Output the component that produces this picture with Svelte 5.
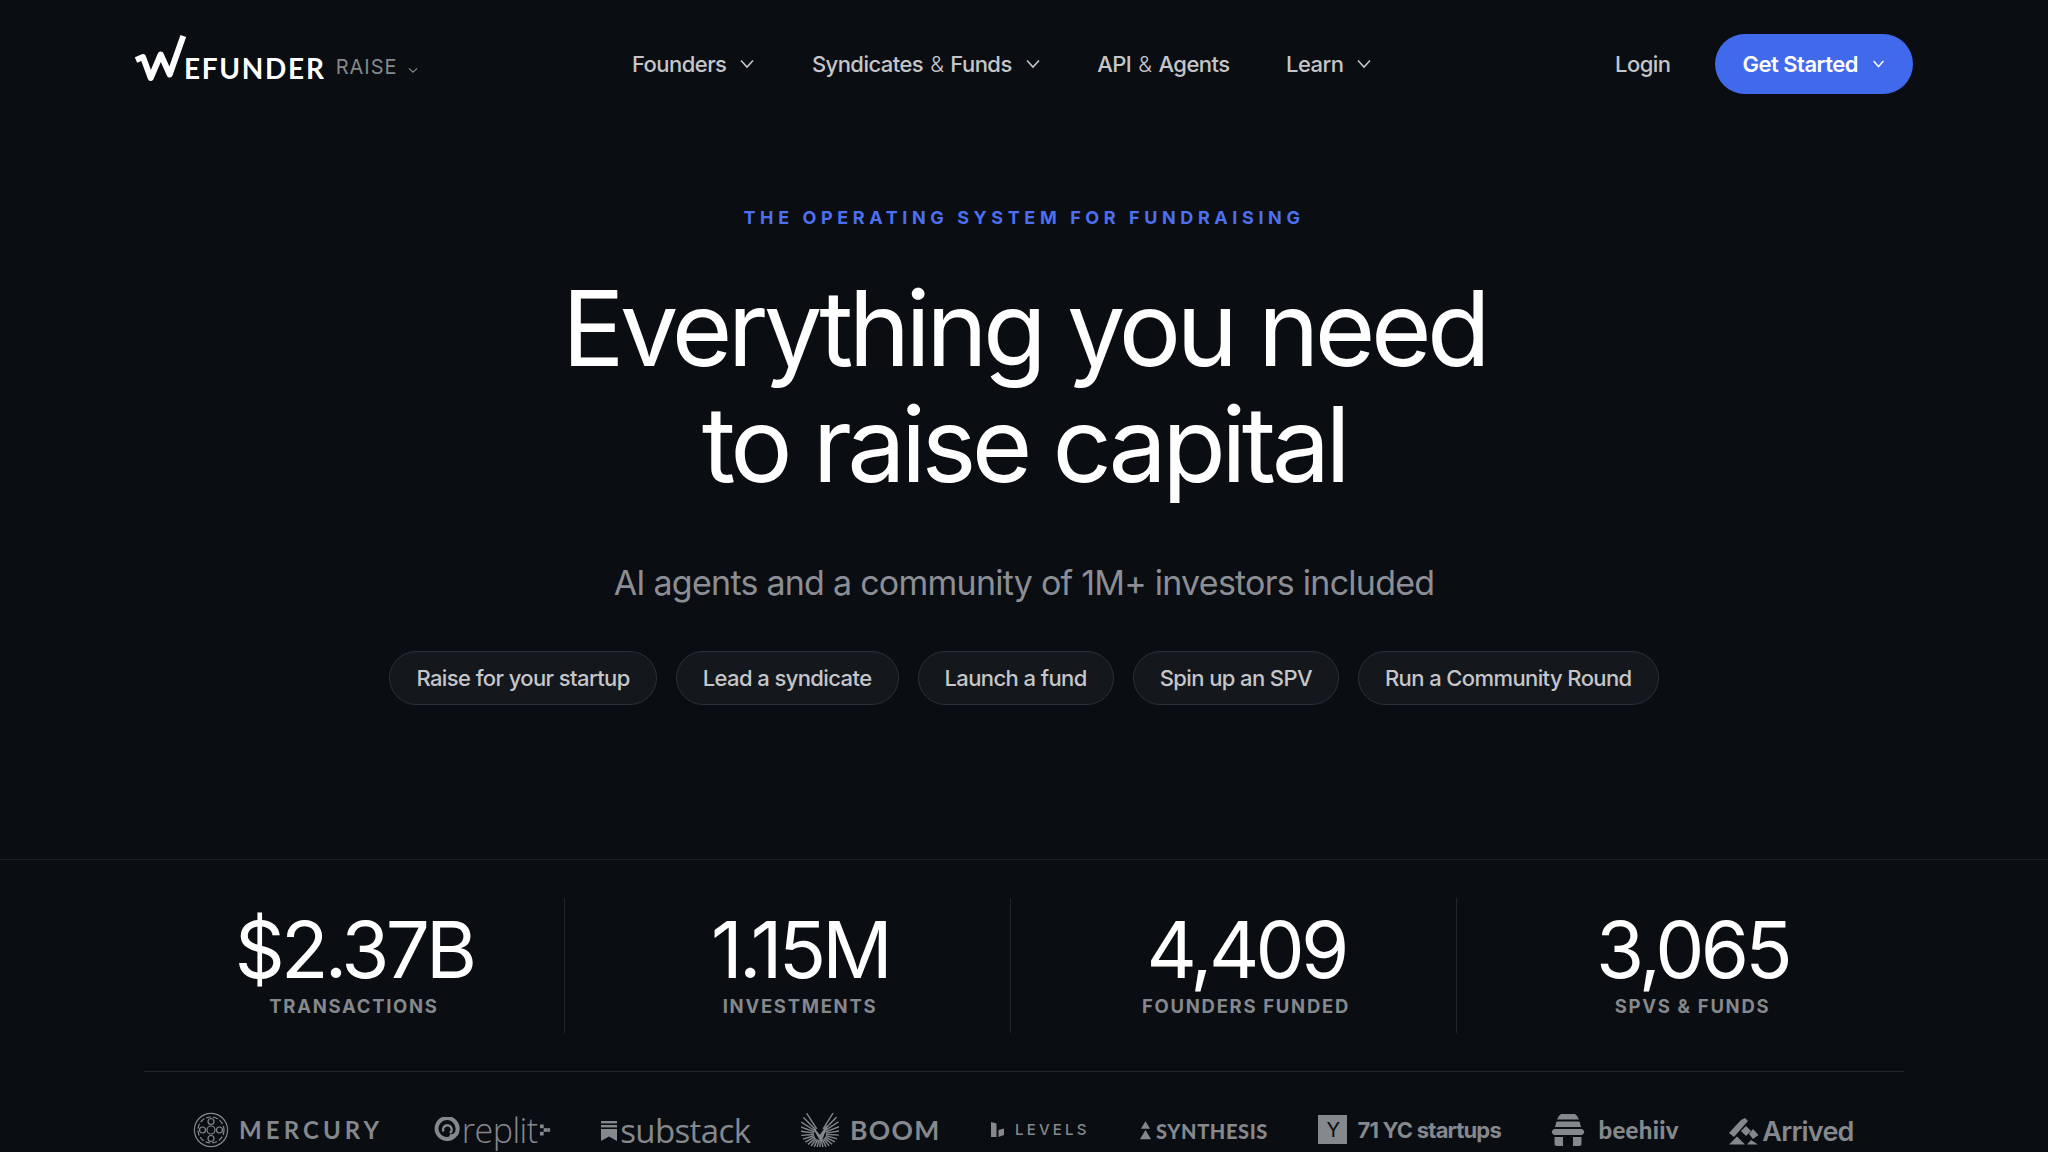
<script lang="ts">
  const navItems = [
    { before: 'Founders', caret: true },
    { before: 'Syndicates', amp: true, after: 'Funds', caret: true },
    { before: 'API', amp: true, after: 'Agents', caret: false },
    { before: 'Learn', caret: true }
  ];
  const chips = ['Raise for your startup', 'Lead a syndicate', 'Launch a fund', 'Spin up an SPV', 'Run a Community Round'];
  const stats = [
    { value: '$2.37B', label: 'TRANSACTIONS' },
    { value: '1.15M', label: 'INVESTMENTS' },
    { value: '4,409', label: 'FOUNDERS FUNDED' },
    { value: '3,065', label: 'SPVS & FUNDS' }
  ];
  // boom mark: rays fan out from a centre, long on the wings and short underneath, notch on top
  const rays: { x1: number; y1: number; x2: number; y2: number }[] = [];
  for (let deg = -32; deg >= -328; deg -= 12.300) {
    const off = Math.abs(deg) > 180 ? 360 - Math.abs(deg) : Math.abs(deg);
    const r = 13 + 12 * Math.pow((180 - off) / 150, 1.300);
    const a = (deg * Math.PI) / 180;
    rays.push({
      x1: 19 - 6 * Math.sin(a),
      y1: 21 - 6 * Math.cos(a),
      x2: 19 - r * Math.sin(a),
      y2: 21 - r * Math.cos(a)
    });
  }
</script>

<div class="page">
  <header class="nav">
    <a class="brand" href="#top">
      <svg class="brand-w" viewBox="0 0 56 50" width="56" height="50" aria-hidden="true">
        <path d="M1 26 L8 23 L15.700 44 L25.700 20.500 L34.700 40.500 L48.300 2" fill="none" stroke="#fff" stroke-width="6" stroke-linejoin="round" />
      </svg>
      <span class="brand-name">EFUNDER</span>
      <span class="brand-sub">RAISE</span>
      <svg class="brand-caret" viewBox="0 0 12 8" width="10" height="7"><path d="M1 1.500 L6 6 L11 1.500" fill="none" stroke="currentColor" stroke-width="1.400" /></svg>
    </a>
    <nav class="links">
      {#each navItems as item}
        <a href="#top" class="link">
          <span>{item.before}{#if item.amp}<span class="amp">&amp;</span>{item.after}{/if}</span>
          {#if item.caret}
            <svg viewBox="0 0 16 10" width="16" height="10"><path d="M2 1.500 L8 8 L14 1.500" fill="none" stroke="currentColor" stroke-width="1.600" /></svg>
          {/if}
        </a>
      {/each}
    </nav>
    <div class="actions">
      <a href="#top" class="link login">Login</a>
      <a href="#top" class="cta">
        Get Started
        <svg viewBox="0 0 14 9" width="13" height="8"><path d="M1.500 1 L7 7.500 L12.500 1" fill="none" stroke="currentColor" stroke-width="1.700" /></svg>
      </a>
    </div>
  </header>

  <section class="hero">
    <p class="eyebrow">THE OPERATING SYSTEM FOR FUNDRAISING</p>
    <h1>Everything you need<br />to raise capital</h1>
    <p class="sub">AI agents and a community of 1M+ investors included</p>
    <div class="chips">
      {#each chips as chip}
        <a href="#top" class="chip">{chip}</a>
      {/each}
    </div>
  </section>

  <section class="proof">
    <div class="stats">
      {#each stats as s}
        <div class="stat">
          <div class="stat-value">{s.value}</div>
          <div class="stat-label">{s.label}</div>
        </div>
      {/each}
    </div>

    <div class="logos">
      <div class="logo mercury">
        <svg viewBox="0 0 36 36" width="36" height="36" fill="none" stroke="#85888c" stroke-width="1.200">
          <circle cx="18" cy="18" r="16.600" />
          <circle cx="18" cy="18" r="13" stroke-dasharray="5 2" />
          <circle cx="18" cy="18" r="4" />
          <circle cx="18" cy="9.500" r="3" />
          <circle cx="18" cy="26.500" r="3" />
          <circle cx="9.500" cy="18" r="3" />
          <circle cx="26.500" cy="18" r="3" />
        </svg>
        <span>MERCURY</span>
      </div>
      <div class="logo replit">
        <svg viewBox="0 0 26 26" width="26" height="26" fill="none" stroke="#85888c">
          <path d="M21 18.500 A10.500 10.500 0 1 1 23.500 13 C23.500 18 19 20 15.500 19" stroke-width="4" />
          <path d="M9.500 14.500 A4.300 4.300 0 1 1 16 16" stroke-width="2.400" />
        </svg>
        <span>replit</span>
        <svg viewBox="0 0 12 14" width="11" height="14" fill="#85888c">
          <rect x="0" y="1" width="4" height="4" /><rect x="4" y="5" width="4" height="4" /><rect x="0" y="9" width="4" height="4" /><rect x="8" y="5" width="3" height="4" />
        </svg>
      </div>
      <div class="logo substack">
        <svg viewBox="0 0 16 20" width="16" height="20" fill="#85888c">
          <rect x="0" y="0" width="16" height="2.400" /><rect x="0" y="4" width="16" height="2.400" />
          <path d="M0 8 H16 V20 L8 15.500 L0 20 Z" />
        </svg>
        <span>substack</span>
      </div>
      <div class="logo boom">
        <svg viewBox="0 0 38 34" width="38" height="34" stroke="#85888c" stroke-width="1.400">
          {#each rays as r}
            <line x1={r.x1} y1={r.y1} x2={r.x2} y2={r.y2} />
          {/each}
          <path d="M13 16 L19 23 L26 13 L20 28 Z" fill="#85888c" />
        </svg>
        <span>BOOM</span>
      </div>
      <div class="logo levels">
        <svg viewBox="0 0 14 15" width="14" height="15" fill="#85888c">
          <path d="M0 0 L5.500 1.500 V15 H0 Z" /><path d="M7.500 8 L13 6.500 V13 L7.500 15 Z" />
        </svg>
        <span>LEVELS</span>
      </div>
      <div class="logo synthesis">
        <svg viewBox="0 0 12 20" width="11" height="19" fill="#85888c">
          <path d="M6 0 L11 8 H1 Z" /><path d="M6 9.500 L12 19.500 H0 Z" />
        </svg>
        <span>SYNTHESIS</span>
      </div>
      <div class="logo yc">
        <span class="yc-box">Y</span>
        <span>71 YC startups</span>
      </div>
      <div class="logo beehiiv">
        <svg viewBox="0 0 34 32" width="34" height="32" fill="#85888c">
          <path d="M10 0 H24 Q27 2 28 5.500 H6 Q7 2 10 0 Z" />
          <path d="M5.500 7.500 H28.500 L30 13 H4 Z" />
          <path d="M3 15 H31 Q35.500 18 31 21 H3 Q-1.500 18 3 15 Z" />
          <path d="M3.500 23 H12 V32 H6 Q3.500 32 3.500 30 Z" />
          <path d="M22 23 H30.500 V30 Q30.500 32 28 32 H22 Z" />
          <path d="M13 32 V27 Q17 21 21 27 V32 Z" fill="#0a0d12" />
        </svg>
        <span>beehiiv</span>
      </div>
      <div class="logo arrived">
        <svg viewBox="0 0 30 27" width="30" height="27" fill="#85888c">
          <path d="M0 15 L12 2 L16 0 L19 3 L5 19 Z" />
          <path d="M17 8 L22 13 L17 18 L12 13 Z" />
          <path d="M24 11 L29.500 17 L24 21 L20 16 Z" />
          <path d="M0 26.500 L8 18.500 L16 26.500 Z" />
          <path d="M18 26.500 L22 22 L29 26.500 Z" />
        </svg>
        <span>Arrived</span>
      </div>
    </div>
  </section>
</div>

<style>
  :global(body) {
    margin: 0;
    background: #0a0d12;
  }
  .page {
    height: 1152px;
    overflow: hidden;
    background: #0a0d12;
    font-family: Inter, "Liberation Sans", sans-serif;
    color: #fff;
  }
  a {
    color: inherit;
    text-decoration: none;
  }
  .nav {
    display: flex;
    align-items: center;
    justify-content: space-between;
    height: 60px;
    padding: 34px 135px 0 135px;
    position: relative;
  }
  .brand {
    display: flex;
    align-items: flex-end;
    align-self: flex-start;
    width: 290px;
    height: 50px;
  }
  .brand-w {
    flex: none;
    margin-right: -7px;
  }
  .brand-name {
    font-family: Lato, Inter, sans-serif;
    font-size: 28px;
    font-weight: 700;
    letter-spacing: 1.700px;
    line-height: 24px;
    margin-bottom: 4px;
  }
  .brand-sub {
    font-size: 20px;
    font-weight: 400;
    letter-spacing: 1px;
    color: #85888c;
    line-height: 24px;
    margin: 0 0 5px 10px;
  }
  .brand-caret {
    color: #85888c;
    margin: 0 0 10px 10px;
  }
  .links {
    display: flex;
    gap: 56.500px;
    position: absolute;
    left: 632px;
    top: 48px;
  }
  .link {
    display: flex;
    align-items: center;
    gap: 13px;
    font-size: 22px;
    font-weight: 500;
    letter-spacing: -0.550px;
    line-height: 32px;
    color: #c4c6ca;
  }
  .amp {
    font-weight: 300;
    margin: 0 7px;
  }
  .actions {
    display: flex;
    align-items: center;
    gap: 45px;
  }
  .cta {
    display: flex;
    align-items: center;
    gap: 14px;
    height: 60px;
    padding: 0 28px 0 27px;
    border-radius: 30px;
    background: #4169ec;
    font-size: 22px;
    font-weight: 600;
    letter-spacing: -0.500px;
    color: #fff;
  }
  .hero {
    display: flex;
    flex-direction: column;
    align-items: center;
    margin-top: 111px;
  }
  .eyebrow {
    margin: 0;
    font-size: 18px;
    line-height: 26px;
    font-weight: 700;
    letter-spacing: 4.600px;
    color: #4c70f0;
  }
  h1 {
    margin: 39px 0 0;
    font-size: 104px;
    line-height: 116px;
    font-weight: 400;
    letter-spacing: -4.600px;
    text-align: center;
  }
  .sub {
    margin: 58px 0 0;
    font-size: 34px;
    line-height: 46px;
    font-weight: 400;
    letter-spacing: -0.750px;
    color: #8b8e94;
  }
  .chips {
    display: flex;
    gap: 19px;
    margin-top: 45px;
  }
  .chip {
    display: flex;
    align-items: center;
    height: 52px;
    padding: 0 26px;
    border: 1px solid #2c2f35;
    border-radius: 27px;
    background: #14171c;
    font-size: 22px;
    font-weight: 500;
    letter-spacing: -0.600px;
    color: #c4c6ca;
  }
  .proof {
    margin-top: 154px;
    border-top: 1px solid #1b1e23;
    padding: 38px 144px 0;
  }
  .stats {
    display: grid;
    grid-template-columns: repeat(4, 1fr);
    column-gap: 24px;
    height: 135px;
    padding-bottom: 38px;
    border-bottom: 1px solid #22252a;
  }
  .stat {
    display: flex;
    flex-direction: column;
    align-items: center;
    margin-right: 1px;
    border-right: 1px solid #22252a;
  }
  .stat:last-child {
    border-right: none;
  }
  .stat-value {
    font-size: 78px;
    line-height: 78px;
    margin-top: 13px;
    font-weight: 400;
    letter-spacing: -3.800px;
  }
  .stat-label {
    font-size: 18.500px;
    line-height: 24px;
    margin-top: 5px;
    font-weight: 700;
    letter-spacing: 1.700px;
    color: #85888c;
  }
  .logos {
    display: flex;
    align-items: center;
    gap: 50.500px;
    padding: 34px 0 0 49px;
    color: #85888c;
  }
  .logo {
    display: flex;
    align-items: center;
    gap: 8px;
    height: 44px;
    flex: none;
  }
  .mercury {
    gap: 10px;
    font-family: Lato, sans-serif;
    font-size: 24px;
    font-weight: 700;
    letter-spacing: 4.100px;
  }
  .replit {
    gap: 2px;
    font-family: "Open Sans", sans-serif;
    font-size: 34px;
    font-weight: 300;
    letter-spacing: -0.500px;
  }
  .substack {
    gap: 3px;
    font-family: "Open Sans", sans-serif;
    font-size: 33px;
    letter-spacing: -0.600px;
    padding-top: 2px;
  }
  .boom {
    gap: 11px;
    font-family: Lato, sans-serif;
    font-size: 26.500px;
    font-weight: 700;
    letter-spacing: 1.300px;
  }
  .levels {
    gap: 10px;
    font-size: 15px;
    font-weight: 500;
    letter-spacing: 3.200px;
  }
  .synthesis {
    gap: 5px;
    font-family: Lato, sans-serif;
    font-size: 20px;
    font-weight: 900;
    letter-spacing: 0.600px;
    padding-top: 2px;
  }
  .yc {
    gap: 10px;
    font-size: 22px;
    font-weight: 700;
    letter-spacing: -0.800px;
  }
  .yc-box {
    display: flex;
    align-items: center;
    justify-content: center;
    width: 29px;
    height: 29px;
    background: #85888c;
    color: #0a0d12;
    font-size: 20px;
    font-weight: 400;
  }
  .beehiiv {
    gap: 13px;
    font-family: Lato, sans-serif;
    font-size: 24px;
    font-weight: 900;
    letter-spacing: 0.300px;
  }
  .arrived {
    gap: 3px;
    font-size: 27px;
    font-weight: 600;
    letter-spacing: -0.800px;
    padding-top: 3px;
  }
</style>
